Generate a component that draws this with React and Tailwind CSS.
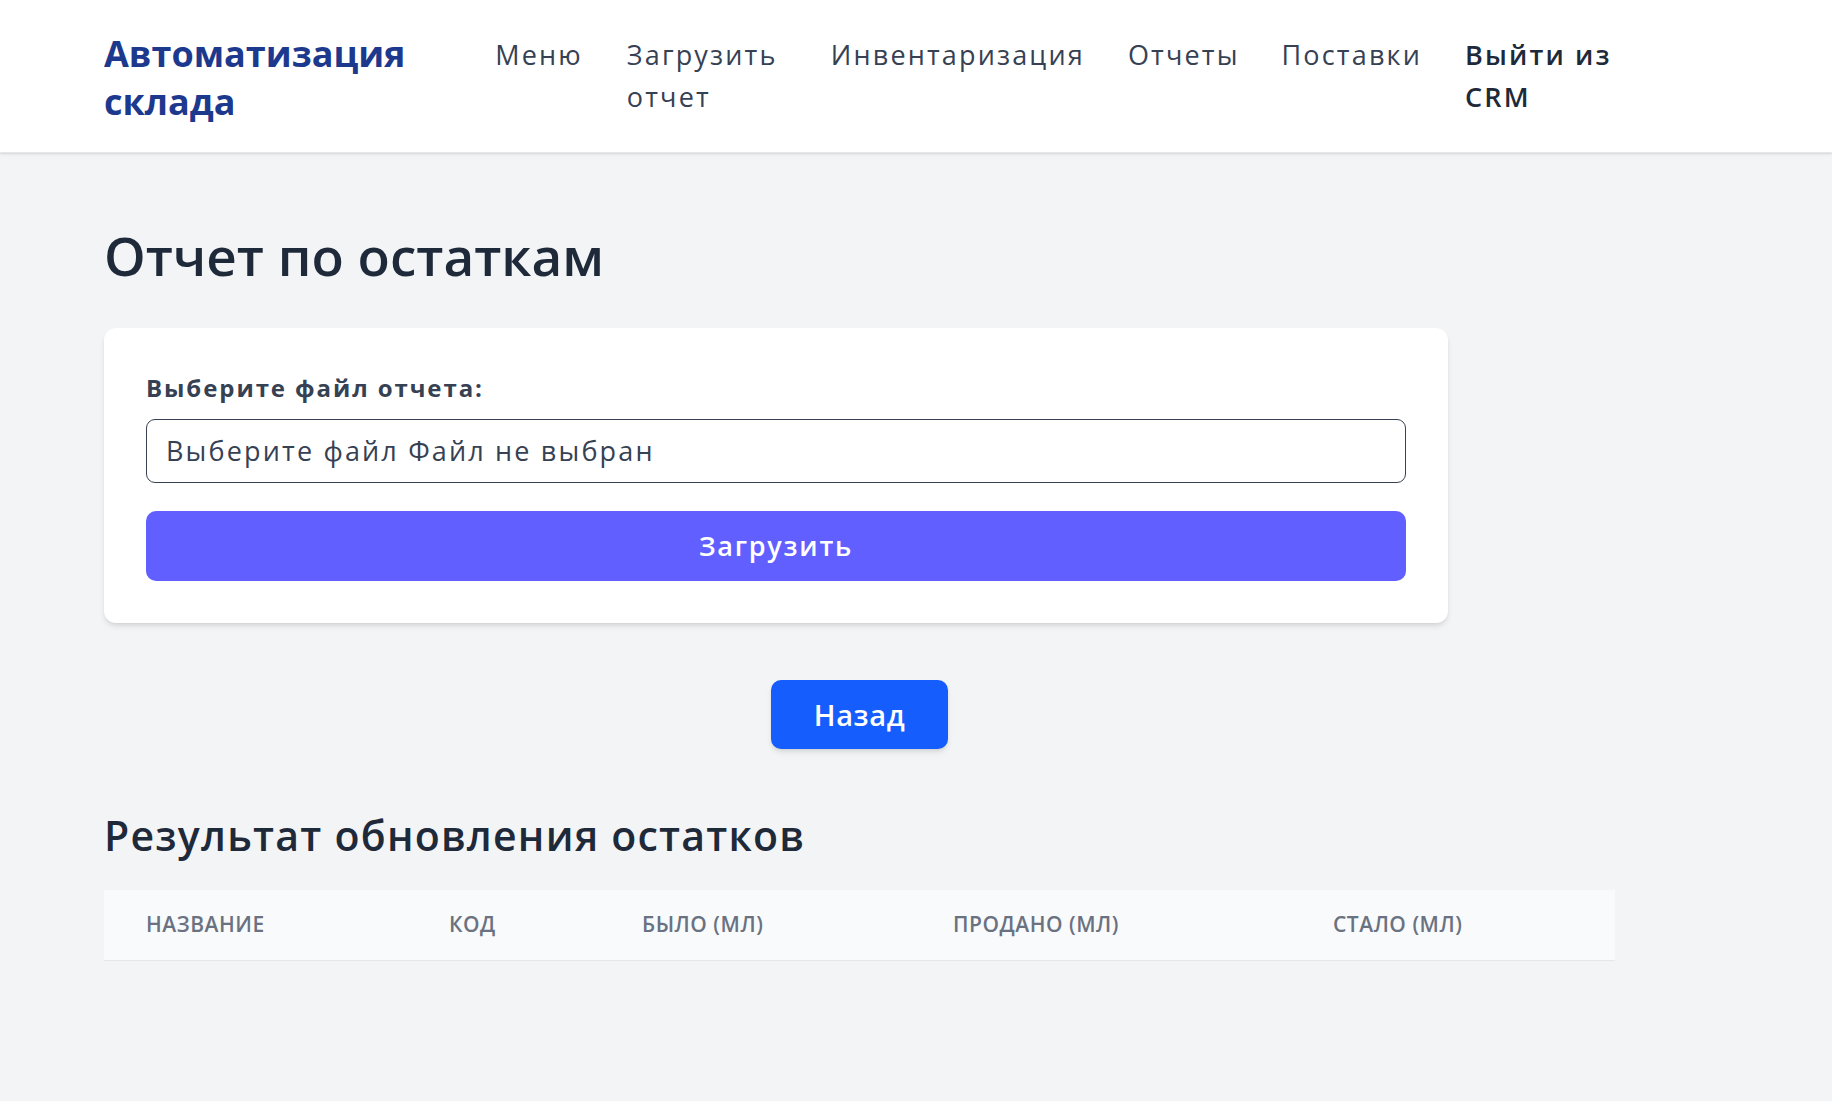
import React from 'react'

const columns = [
    { title: 'Название', w: 'w-[303px]' },
    { title: 'Код', w: 'w-[193px]' },
    { title: 'Было (мл)', w: 'w-[311px]' },
    { title: 'Продано (мл)', w: 'w-[380px]' },
    { title: 'Стало (мл)', w: '' },
]

export default function App() {
    return (
        <div className="min-h-screen bg-gray-100 font-['Open_Sans','Noto_Sans',sans-serif]">
            <header className="h-[153px] bg-white border-b border-gray-200 shadow-sm">
                <div className="ml-[104px] w-[1511px] h-full flex items-center">
                    <div className="w-[350px] mt-[3px] text-[36px] leading-[48px] font-bold text-blue-900">
                        Автоматизация склада
                    </div>
                    <nav className="ml-[50px] flex items-start text-[27px] leading-[42px] text-gray-700 tracking-[0.08em]">
                        <a>Меню</a>
                        <a className="ml-[44px] w-[160px]">Загрузить отчет</a>
                        <a className="ml-[44px]">Инвентаризация</a>
                        <a className="ml-[43px]">Отчеты</a>
                        <a className="ml-[42px]">Поставки</a>
                        <a className="ml-[43px] w-[150px] font-semibold text-gray-800">Выйти из CRM</a>
                    </nav>
                </div>
            </header>

            <main className="ml-[104px] w-[1511px] pt-[73px] pb-16">
                <h1 className="text-[53px] leading-[60px] font-semibold text-gray-800 mb-[42px]">
                    Отчет по остаткам
                </h1>

                <div className="w-[1344px] bg-white rounded-xl shadow-md p-[42px]">
                    <label className="block text-[24px] leading-[36px] font-bold text-gray-700 tracking-[0.08em] mb-[13px]">
                        Выберите файл отчета:
                    </label>
                    <div className="h-[64px] flex items-center border-[1.5px] border-gray-700 rounded-[9px] pl-[19px] text-[27px] leading-[42px] text-gray-700 tracking-[0.08em]">
                        Выберите файл Файл не выбран
                    </div>
                    <button className="mt-[28px] h-[70px] w-full bg-indigo-500 rounded-[10px] text-white text-[27px] font-semibold tracking-[0.065em]">
                        Загрузить
                    </button>
                </div>

                <div className="flex justify-center mt-[57px]">
                    <button className="h-[69px] px-[43px] bg-blue-600 rounded-[10px] text-white text-[29px] font-semibold tracking-[0.02em] shadow-md">
                        Назад
                    </button>
                </div>

                <h2 className="mt-[59px] text-[41px] leading-[54px] font-semibold text-gray-800 tracking-[0.03em]">
                    Результат обновления остатков
                </h2>

                <table className="mt-[28px] w-full">
                    <thead className="bg-gray-50 border-b-[1.5px] border-gray-200">
                        <tr>
                            {columns.map(c => (
                                <th key={c.title} className={`${c.w} h-[70px] px-[42px] text-left text-[21px] font-semibold text-gray-500 uppercase tracking-wide`}>
                                    {c.title}
                                </th>
                            ))}
                        </tr>
                    </thead>
                </table>
            </main>
        </div>
    )
}
